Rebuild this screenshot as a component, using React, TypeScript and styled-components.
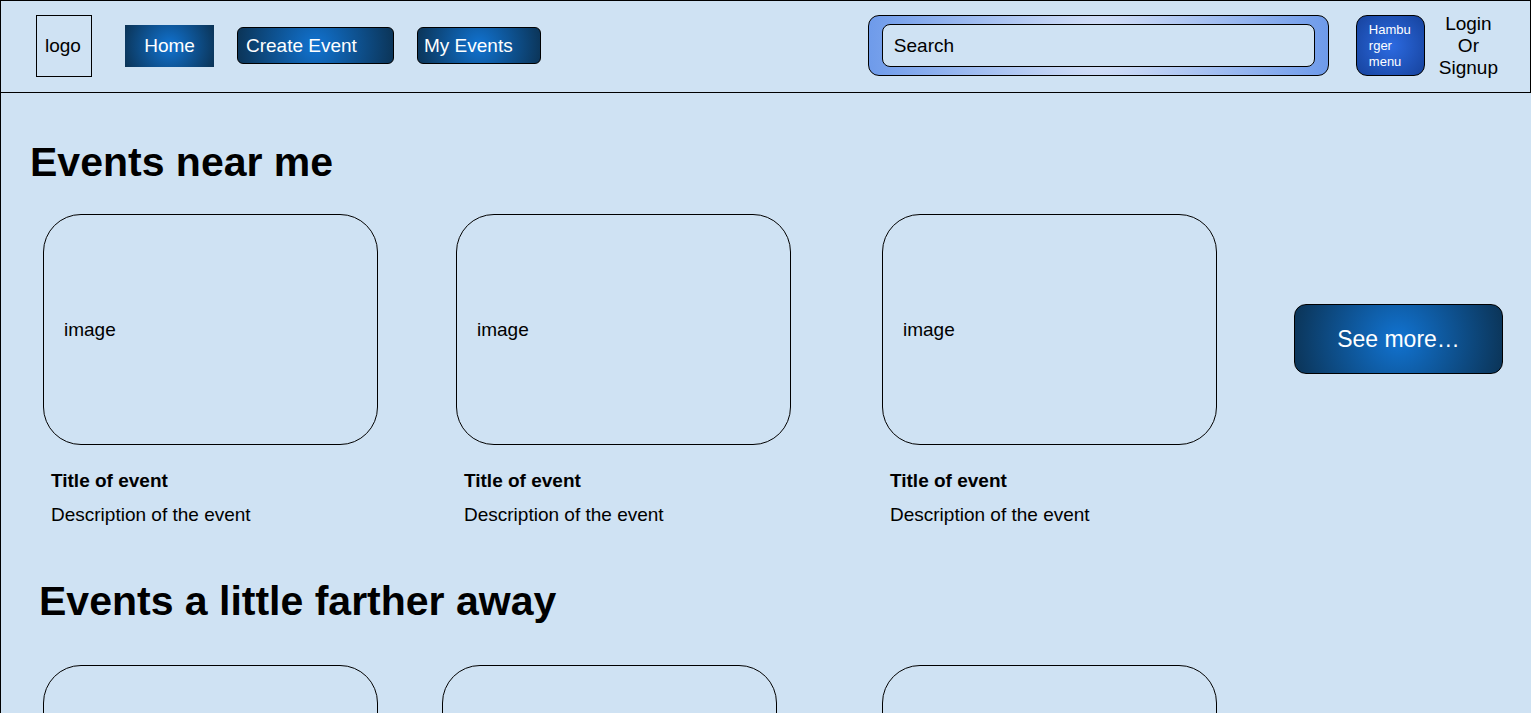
import React from "react";
import styled, { createGlobalStyle } from "styled-components";

const GlobalStyle = createGlobalStyle`
  *, *::before, *::after { box-sizing: border-box; }
  body {
    margin: 0;
    background: #cfe2f3;
    color: #000;
    font-family: "Liberation Sans", Arial, Helvetica, sans-serif;
    font-size: 19px;
    line-height: 22px;
  }
  button, input { font: inherit; color: inherit; margin: 0; }
`;

const blueGradient = "radial-gradient(circle, #1173d1 0%, #0b3355 100%)";

const Page = styled.div`
  display: flex;
  flex-direction: column;
  height: 100vh;
`;

const Header = styled.header`
  display: flex;
  align-items: center;
  flex: none;
  min-height: 93px;
  padding: 0 32px 2px 35px;
  border: 1px solid #000;
`;

const Logo = styled.a`
  display: flex;
  align-items: center;
  flex: none;
  width: 56px;
  height: 62px;
  margin-right: 33px;
  padding-left: 8px;
  border: 1px solid #000;
  color: inherit;
  text-decoration: none;
`;

const Nav = styled.nav`
  display: flex;
  align-items: center;
  flex: none;
  gap: 23px;
`;

const HomeButton = styled.button`
  width: 89px;
  height: 42px;
  padding: 0;
  border: 0;
  background: ${blueGradient};
  color: #fff;
`;

const NavButton = styled.button<{ $width: number; $inset: number }>`
  width: ${(p) => p.$width}px;
  height: 37px;
  padding: 0 0 0 ${(p) => p.$inset}px;
  border: 1px solid #000;
  border-radius: 6px;
  background: ${blueGradient};
  background-origin: border-box;
  color: #fff;
  text-align: left;
`;

const SearchBar = styled.form`
  flex: 0 1 461px;
  margin-left: auto;
  padding: 8px 13px;
  border: 1px solid #000;
  border-radius: 11px;
  background: radial-gradient(circle, #dae4f8 0%, #6d9aea 100%);
  background-origin: border-box;
`;

const SearchInput = styled.input`
  display: block;
  width: 100%;
  height: 43px;
  padding: 0 11px;
  border: 1px solid #000;
  border-radius: 8px;
  background: #cfe2f3;
  &::placeholder { color: #000; opacity: 1; }
`;

const MenuButton = styled.button`
  flex: none;
  width: 69px;
  height: 61px;
  margin: 0 14px 0 27px;
  padding: 0 11px 0 12px;
  border: 1px solid #000;
  border-radius: 11px;
  background: radial-gradient(circle, #2c6be2 0%, #16419a 100%);
  background-origin: border-box;
  color: #fff;
  font-size: 13px;
  line-height: 16px;
  text-align: left;
  overflow-wrap: anywhere;
`;

const Account = styled.div`
  display: flex;
  flex-direction: column;
  align-items: center;
  flex: none;
`;

const AccountLink = styled.a`
  color: inherit;
  text-decoration: none;
`;

const Main = styled.main`
  flex: 1;
  min-height: 0;
  overflow-y: auto;
  scrollbar-width: none;
  padding: 45px 28px 0 0;
  border-left: 1px solid #000;
`;

const Section = styled.section`
  margin-bottom: 51px;
`;

const Heading = styled.h2<{ $indent: number; $gap: number }>`
  margin: 0 0 ${(p) => p.$gap}px;
  padding-left: ${(p) => p.$indent}px;
  font-size: 41px;
  line-height: 48px;
`;

const EventGrid = styled.div<{ $columns: string }>`
  display: grid;
  grid-template-columns: ${(p) => p.$columns};
  padding-left: 42px;
`;

const ImageBox = styled.div`
  display: flex;
  align-items: center;
  width: 335px;
  max-width: 100%;
  height: 231px;
  padding-left: 20px;
  border: 1px solid #000;
  border-radius: 38px;
`;

const EventTitle = styled.h3`
  margin: 25px 0 12px;
  padding-left: 8px;
  font-size: 19px;
  line-height: 22px;
`;

const EventText = styled.p`
  margin: 0;
  padding-left: 8px;
`;

const SeeMore = styled.button`
  height: 70px;
  margin-top: 90px;
  padding: 0;
  border: 1px solid #000;
  border-radius: 12px;
  background: ${blueGradient};
  background-origin: border-box;
  color: #fff;
  font-size: 23px;
`;

const events = [1, 2, 3];

export default function App() {
  return (
    <Page>
      <GlobalStyle />
      <Header>
        <Logo href="#">logo</Logo>
        <Nav>
          <HomeButton type="button">Home</HomeButton>
          <NavButton type="button" $width={157} $inset={8}>Create Event</NavButton>
          <NavButton type="button" $width={124} $inset={6}>My Events</NavButton>
        </Nav>
        <SearchBar role="search">
          <SearchInput type="text" placeholder="Search" aria-label="Search" />
        </SearchBar>
        <MenuButton type="button">Hamburger menu</MenuButton>
        <Account>
          <AccountLink href="#">Login</AccountLink>
          <span>Or</span>
          <AccountLink href="#">Signup</AccountLink>
        </Account>
      </Header>
      <Main>
        <Section>
          <Heading $indent={29} $gap={28}>Events near me</Heading>
          <EventGrid $columns="413fr 426fr 412fr 209fr">
            {events.map((id) => (
              <article key={id}>
                <ImageBox>image</ImageBox>
                <EventTitle>Title of event</EventTitle>
                <EventText>Description of the event</EventText>
              </article>
            ))}
            <SeeMore type="button">See more…</SeeMore>
          </EventGrid>
        </Section>
        <Section>
          <Heading $indent={38} $gap={40}>Events a little farther away</Heading>
          <EventGrid $columns="399fr 440fr 412fr 209fr">
            {events.map((id) => (
              <ImageBox key={id} />
            ))}
          </EventGrid>
        </Section>
      </Main>
    </Page>
  );
}
